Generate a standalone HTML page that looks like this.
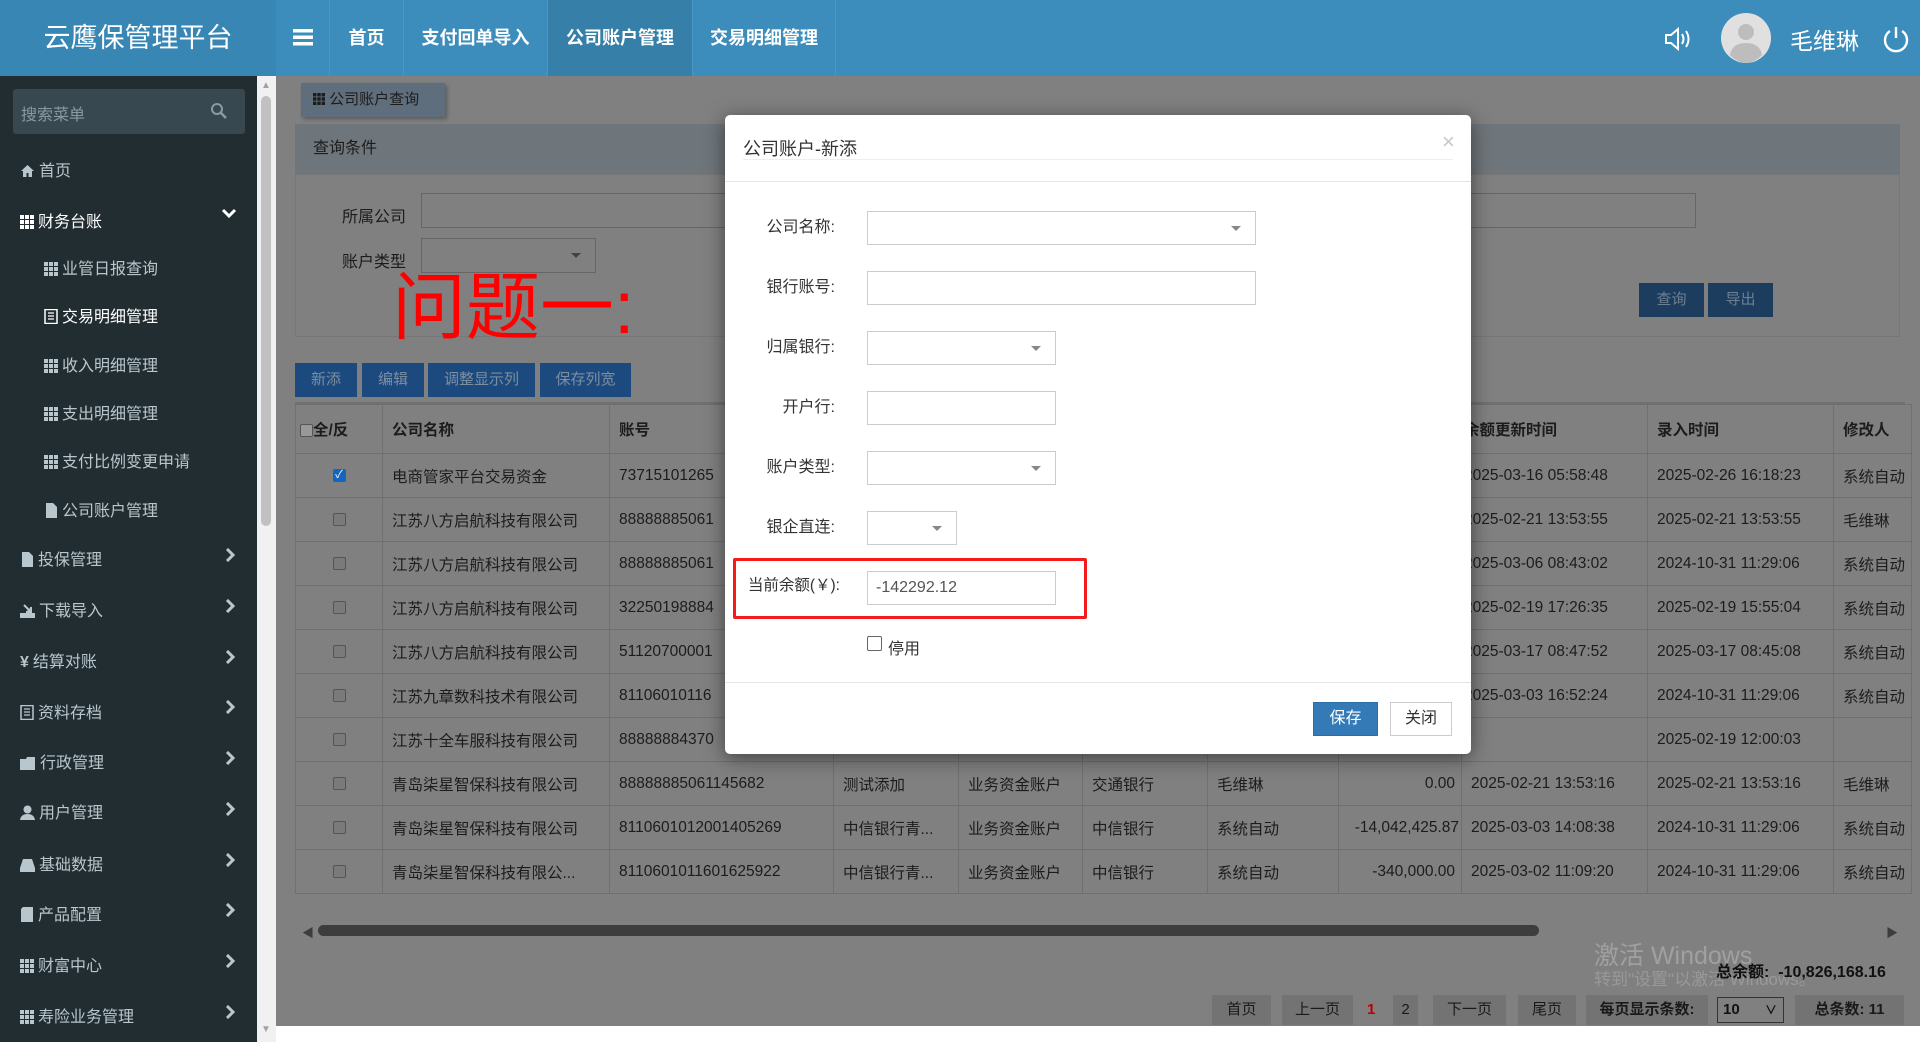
<!DOCTYPE html>
<html><head><meta charset="utf-8">
<style>
*{box-sizing:border-box;margin:0;padding:0}
body{width:1920px;height:1042px;overflow:hidden;position:relative;background:#fff;font-family:"Liberation Sans","Noto Sans CJK SC",sans-serif;}
.abs{position:absolute}
#hdr{left:0;top:0;width:1920px;height:76px;background:#3c8dbc}
#logo{left:0;top:0;width:276px;height:76px;background:#3886b4;color:#fff;font-size:27px;line-height:76px;text-align:center}
.nav{top:0;height:76px;line-height:76px;color:#fff;font-weight:bold;font-size:18px;text-align:center;border-right:1px solid #4a97c4}
#side{left:0;top:76px;width:257px;height:966px;background:#222d32}
#sbar{left:257px;top:76px;width:19px;height:966px;background:#f1f1f1}
.mi{left:20px;color:#b8c7ce;font-size:16px;height:24px;line-height:24px}
.mi svg{vertical-align:-2px;margin-right:4px}
.sub{left:44px}
.arr{left:225px}
#content{left:276px;top:76px;width:1644px;height:950px;background:#808080;overflow:hidden}
table{border-collapse:collapse;table-layout:fixed;font-size:15.5px;color:#1c1c1c}
td{border:1px solid #707070;height:44px;padding:0 9px;white-space:nowrap;overflow:hidden}
th{border:1px solid #707070;height:49px;padding:0 9px;text-align:left;font-weight:bold;white-space:nowrap;overflow:hidden}
.cb{display:inline-block;width:13px;height:13px;border:1px solid #555;border-radius:2px;background:#7a7a7a;vertical-align:middle}
.btn{height:34px;line-height:34px;color:#7d8ea0;font-size:15px;text-align:center;background:#1c4a7e}
.pg{top:919px;height:30px;line-height:30px;background:#737373;color:#1a1a1a;font-size:15px;text-align:center}
#modal{left:725px;top:115px;width:746px;height:639px;background:#fff;border-radius:5px;box-shadow:0 4px 20px rgba(0,0,0,.5)}
.lab{font-size:16px;color:#333;text-align:right;width:120px;left:0}
.inp{border:1px solid #ccc;height:34px;background:#fff}
.dd{position:absolute;right:14px;top:14px;width:0;height:0;border-left:5px solid transparent;border-right:5px solid transparent;border-top:5px solid #888}
</style></head><body>
<div id="hdr" class="abs"></div>
<div id="logo" class="abs">云鹰保管理平台</div>
<div class="abs nav" style="left:276px;width:54px;"><svg width="20" height="18" viewBox="0 0 20 18" style="vertical-align:-2px"><rect x="0" y="1" width="20" height="3.5" fill="#fff"/><rect x="0" y="7.5" width="20" height="3.5" fill="#fff"/><rect x="0" y="14" width="20" height="3.5" fill="#fff"/></svg></div>
<div class="abs nav" style="left:330px;width:74px;">首页</div>
<div class="abs nav" style="left:404px;width:144px;">支付回单导入</div>
<div class="abs nav" style="left:548px;width:145px;background:#367fa9">公司账户管理</div>
<div class="abs nav" style="left:693px;width:143px;">交易明细管理</div>
<svg class="abs" style="left:1664px;top:26px" width="30" height="26" viewBox="0 0 30 26"><path d="M2 9h5l7-6v20l-7-6H2z" fill="none" stroke="#fff" stroke-width="2"/><path d="M18 8q3 5 0 10M22 5q5 8 0 16" fill="none" stroke="#fff" stroke-width="2"/></svg>
<svg class="abs" style="left:1721px;top:13px" width="50" height="50" viewBox="0 0 50 50"><circle cx="25" cy="25" r="25" fill="#e0e0e0"/><circle cx="25" cy="19" r="8" fill="#bdbdbd"/><path d="M9 42q2-12 16-12t16 12q-8 8-16 8t-16-8z" fill="#bdbdbd"/></svg>
<div class="abs" style="left:1790px;top:22px;color:#fff;font-size:23px">毛维琳</div>
<svg class="abs" style="left:1882px;top:25px" width="28" height="28" viewBox="0 0 28 28"><path d="M8 6a11 11 0 1 0 12 0" fill="none" stroke="#fff" stroke-width="2.4"/><path d="M14 2v11" stroke="#fff" stroke-width="2.4"/></svg>

<div id="side" class="abs"></div>
<div id="sbar" class="abs"><div class="abs" style="left:4px;top:20px;width:10px;height:430px;background:#c1c1c1;border-radius:5px"></div><div class="abs" style="left:4px;top:4px;color:#a3a3a3;font-size:10px">▲</div><div class="abs" style="left:4px;top:948px;color:#a3a3a3;font-size:10px">▼</div></div>
<div class="abs" style="left:13px;top:89px;width:232px;height:45px;background:#374850;border-radius:3px"></div>
<div class="abs" style="left:21px;top:101px;color:#8a9aa2;font-size:16px">搜索菜单</div>
<svg class="abs" style="left:210px;top:102px" width="18" height="18" viewBox="0 0 18 18"><circle cx="7" cy="7" r="5" fill="none" stroke="#8a9aa2" stroke-width="2"/><path d="M11 11l5 5" stroke="#8a9aa2" stroke-width="2.5"/></svg>

<svg width="0" height="0" style="position:absolute"><defs><g id="g"><rect x="0" y="0" width="4" height="4"/><rect x="5" y="0" width="4" height="4"/><rect x="10" y="0" width="4" height="4"/><rect x="0" y="5" width="4" height="4"/><rect x="5" y="5" width="4" height="4"/><rect x="10" y="5" width="4" height="4"/><rect x="0" y="10" width="4" height="4"/><rect x="5" y="10" width="4" height="4"/><rect x="10" y="10" width="4" height="4"/></g><path id="chev" d="M2 1l6 6-6 6" fill="none" stroke="#b8c7ce" stroke-width="3"/></defs></svg>

<div class="abs mi" style="top:160px"><svg width="15" height="14"><path d="M7.5 1L1 7h2v6h3.5V9h2v4H12V7h2z" fill="#b8c7ce"/></svg>首页</div>
<div class="abs mi" style="top:211px;color:#fff"><svg width="14" height="14" fill="#fff"><use href="#g"/></svg>财务台账</div>
<svg class="abs" style="left:221px;top:208px" width="16" height="12"><path d="M2 2l6 6 6-6" fill="none" stroke="#fff" stroke-width="3"/></svg>
<div class="abs mi sub" style="top:258px"><svg width="14" height="14" fill="#b8c7ce"><use href="#g"/></svg>业管日报查询</div>
<div class="abs mi sub" style="top:306px;color:#fff"><svg width="14" height="15"><rect x="1" y="0.5" width="12" height="14" fill="none" stroke="#fff" stroke-width="1.5"/><path d="M4 4h6M4 7h6M4 10h6" stroke="#fff" stroke-width="1.3"/></svg>交易明细管理</div>
<div class="abs mi sub" style="top:355px"><svg width="14" height="14" fill="#b8c7ce"><use href="#g"/></svg>收入明细管理</div>
<div class="abs mi sub" style="top:403px"><svg width="14" height="14" fill="#b8c7ce"><use href="#g"/></svg>支出明细管理</div>
<div class="abs mi sub" style="top:451px"><svg width="14" height="14" fill="#b8c7ce"><use href="#g"/></svg>支付比例变更申请</div>
<div class="abs mi sub" style="top:500px"><svg width="14" height="15"><path d="M2 0h7l4 4v11H2z" fill="#b8c7ce"/></svg>公司账户管理</div>

<div class="abs mi" style="top:549px"><svg width="14" height="15"><path d="M2 0h7l4 4v11H2z" fill="#b8c7ce"/></svg>投保管理</div>
<div class="abs mi" style="top:600px"><svg width="15" height="15"><path d="M1 14h13v-3H1zM4 2l7 7M6 9h5V4" fill="#b8c7ce" stroke="#b8c7ce" stroke-width="2"/></svg>下载导入</div>
<div class="abs mi" style="top:651px"><span style="font-weight:bold;margin-right:4px">¥</span>结算对账</div>
<div class="abs mi" style="top:702px"><svg width="14" height="15"><rect x="1" y="0.5" width="12" height="14" fill="none" stroke="#b8c7ce" stroke-width="1.5"/><path d="M4 4h6M4 7h6M4 10h6" stroke="#b8c7ce" stroke-width="1.3"/></svg>资料存档</div>
<div class="abs mi" style="top:752px"><svg width="16" height="14"><path d="M0 3h6l1-2h8v13H0z" fill="#b8c7ce"/></svg>行政管理</div>
<div class="abs mi" style="top:802px"><svg width="15" height="15"><circle cx="7.5" cy="4.5" r="4" fill="#b8c7ce"/><path d="M0 15q1-6 7.5-6t7.5 6z" fill="#b8c7ce"/></svg>用户管理</div>
<div class="abs mi" style="top:854px"><svg width="15" height="14"><path d="M3 1h9l3 9v4H0v-4z" fill="#b8c7ce"/></svg>基础数据</div>
<div class="abs mi" style="top:904px"><svg width="14" height="15"><path d="M3 0h10v15H1V2z" fill="#b8c7ce"/></svg>产品配置</div>
<div class="abs mi" style="top:955px"><svg width="14" height="14" fill="#b8c7ce"><use href="#g"/></svg>财富中心</div>
<div class="abs mi" style="top:1006px"><svg width="14" height="14" fill="#b8c7ce"><use href="#g"/></svg>寿险业务管理</div>
<svg class="abs arr" style="top:548px" width="10" height="14"><use href="#chev"/></svg>
<svg class="abs arr" style="top:599px" width="10" height="14"><use href="#chev"/></svg>
<svg class="abs arr" style="top:650px" width="10" height="14"><use href="#chev"/></svg>
<svg class="abs arr" style="top:700px" width="10" height="14"><use href="#chev"/></svg>
<svg class="abs arr" style="top:751px" width="10" height="14"><use href="#chev"/></svg>
<svg class="abs arr" style="top:802px" width="10" height="14"><use href="#chev"/></svg>
<svg class="abs arr" style="top:853px" width="10" height="14"><use href="#chev"/></svg>
<svg class="abs arr" style="top:903px" width="10" height="14"><use href="#chev"/></svg>
<svg class="abs arr" style="top:954px" width="10" height="14"><use href="#chev"/></svg>
<svg class="abs arr" style="top:1005px" width="10" height="14"><use href="#chev"/></svg>

<div id="content" class="abs">
 <div class="abs" style="left:25px;top:7px;width:144px;height:34px;background:#5f6e7c;box-shadow:2px 2px 4px rgba(0,0,0,.3);color:#1c1c1c;font-size:15px;line-height:34px;padding-left:12px"><svg width="12" height="12" fill="#1c1c1c" viewBox="0 0 14 14" style="vertical-align:-1px"><use href="#g"/></svg> 公司账户查询</div>
 <div class="abs" style="left:19px;top:48px;width:1605px;height:50px;background:#6f767b;color:#1c1c1c;font-size:16px;line-height:50px;padding-left:18px">查询条件</div>
 <div class="abs" style="left:19px;top:98px;width:1605px;height:163px;border:1px solid #777"></div>
 <div class="abs" style="left:66px;top:127px;font-size:16px;color:#1c1c1c">所属公司</div>
 <div class="abs" style="left:145px;top:117px;width:1275px;height:35px;border:1px solid #666"></div>
 <div class="abs" style="left:66px;top:172px;font-size:16px;color:#1c1c1c">账户类型</div>
 <div class="abs" style="left:145px;top:162px;width:175px;height:35px;border:1px solid #666"><div class="dd" style="border-top-color:#444"></div></div>
 <div class="abs btn" style="left:1363px;top:207px;width:65px;color:#6d7f92;background:#1c3d5e">查询</div>
 <div class="abs btn" style="left:1432px;top:207px;width:65px;color:#6d7f92;background:#1c3d5e">导出</div>
 <div class="abs btn" style="left:19px;top:287px;width:62px">新添</div>
 <div class="abs btn" style="left:86px;top:287px;width:62px">编辑</div>
 <div class="abs btn" style="left:152px;top:287px;width:107px">调整显示列</div>
 <div class="abs btn" style="left:264px;top:287px;width:91px">保存列宽</div>
 <div class="abs" style="left:19px;top:326px;width:1610px;height:3px;background:#707070"></div>
 <table class="abs" style="left:19px;top:328px;width:1616px">
 <colgroup><col style="width:87px"><col style="width:227px"><col style="width:224px"><col style="width:125px"><col style="width:124px"><col style="width:125px"><col style="width:131px"><col style="width:123px"><col style="width:186px"><col style="width:186px"><col style="width:78px"></colgroup>
 <tr><th style="padding:0 4px"><span class="cb" style="background:#999"></span>全/反</th><th>公司名称</th><th>账号</th><th>备注</th><th>账户类型</th><th>归属银行</th><th>修改人</th><th>余额</th><th style="padding-left:2px">余额更新时间</th><th>录入时间</th><th>修改人</th></tr>
 <tr><td style="text-align:center"><span class="cb" style="background:#1565c0;border-color:#1565c0;color:#fff;font-size:11px;line-height:11px">✓</span></td><td>电商管家平台交易资金</td><td>73715101265</td><td></td><td></td><td></td><td></td><td></td><td style="padding-left:2px">2025-03-16 05:58:48</td><td>2025-02-26 16:18:23</td><td>系统自动</td></tr>
 <tr><td style="text-align:center"><span class="cb"></span></td><td>江苏八方启航科技有限公司</td><td>88888885061</td><td></td><td></td><td></td><td></td><td></td><td style="padding-left:2px">2025-02-21 13:53:55</td><td>2025-02-21 13:53:55</td><td>毛维琳</td></tr>
 <tr><td style="text-align:center"><span class="cb"></span></td><td>江苏八方启航科技有限公司</td><td>88888885061</td><td></td><td></td><td></td><td></td><td></td><td style="padding-left:2px">2025-03-06 08:43:02</td><td>2024-10-31 11:29:06</td><td>系统自动</td></tr>
 <tr><td style="text-align:center"><span class="cb"></span></td><td>江苏八方启航科技有限公司</td><td>32250198884</td><td></td><td></td><td></td><td></td><td></td><td style="padding-left:2px">2025-02-19 17:26:35</td><td>2025-02-19 15:55:04</td><td>系统自动</td></tr>
 <tr><td style="text-align:center"><span class="cb"></span></td><td>江苏八方启航科技有限公司</td><td>51120700001</td><td></td><td></td><td></td><td></td><td></td><td style="padding-left:2px">2025-03-17 08:47:52</td><td>2025-03-17 08:45:08</td><td>系统自动</td></tr>
 <tr><td style="text-align:center"><span class="cb"></span></td><td>江苏九章数科技术有限公司</td><td>81106010116</td><td></td><td></td><td></td><td></td><td></td><td style="padding-left:2px">2025-03-03 16:52:24</td><td>2024-10-31 11:29:06</td><td>系统自动</td></tr>
 <tr><td style="text-align:center"><span class="cb"></span></td><td>江苏十全车服科技有限公司</td><td>88888884370</td><td></td><td></td><td></td><td></td><td></td><td></td><td>2025-02-19 12:00:03</td><td></td></tr>
 <tr><td style="text-align:center"><span class="cb"></span></td><td>青岛柒星智保科技有限公司</td><td>88888885061145682</td><td>测试添加</td><td>业务资金账户</td><td>交通银行</td><td>毛维琳</td><td style="text-align:right;padding-right:6px">0.00</td><td>2025-02-21 13:53:16</td><td>2025-02-21 13:53:16</td><td>毛维琳</td></tr>
 <tr><td style="text-align:center"><span class="cb"></span></td><td>青岛柒星智保科技有限公司</td><td>8110601012001405269</td><td>中信银行青...</td><td>业务资金账户</td><td>中信银行</td><td>系统自动</td><td style="text-align:right;padding:0 2px">-14,042,425.87</td><td>2025-03-03 14:08:38</td><td>2024-10-31 11:29:06</td><td>系统自动</td></tr>
 <tr><td style="text-align:center"><span class="cb"></span></td><td>青岛柒星智保科技有限公...</td><td>8110601011601625922</td><td>中信银行青...</td><td>业务资金账户</td><td>中信银行</td><td>系统自动</td><td style="text-align:right;padding-right:6px">-340,000.00</td><td>2025-03-02 11:09:20</td><td>2024-10-31 11:29:06</td><td>系统自动</td></tr>
 </table>
 <div class="abs" style="left:26px;top:848px;color:#3d3d3d;font-size:12px">◀</div>
 <div class="abs" style="left:42px;top:849px;width:1221px;height:11px;background:#3d3d3d;border-radius:6px"></div>
 <div class="abs" style="left:1610px;top:848px;color:#3d3d3d;font-size:12px">▶</div>
 <div class="abs" style="left:1318px;top:860px;color:#a0a0a0;font-size:25px">激活 Windows</div>
 <div class="abs" style="left:1318px;top:889px;color:#999;font-size:17px">转到"设置"以激活 Windows。</div>
 <div class="abs" style="left:1440px;top:882px;color:#111;font-size:16px;font-weight:bold">总余额: &nbsp;-10,826,168.16</div>
 <div class="abs pg" style="left:936px;width:59px">首页</div>
 <div class="abs pg" style="left:1006px;width:71px">上一页</div>
 <div class="abs" style="left:1091px;top:919px;line-height:30px;color:#b00;font-size:15px;font-weight:bold">1</div>
 <div class="abs pg" style="left:1117px;width:25px">2</div>
 <div class="abs pg" style="left:1157px;width:73px">下一页</div>
 <div class="abs pg" style="left:1242px;width:58px">尾页</div>
 <div class="abs pg" style="left:1310px;width:122px;font-weight:bold">每页显示条数:</div>
 <div class="abs" style="left:1441px;top:921px;width:67px;height:26px;border:1px solid #333;background:#808080;font-size:15px;font-weight:bold;line-height:24px;padding-left:5px;color:#111">10 <span style="position:absolute;right:6px;font-size:12px">∨</span></div>
 <div class="abs pg" style="left:1519px;width:109px;font-weight:bold">总条数: 11</div>
</div>

<div class="abs" style="left:392px;top:268px;color:#ff0000;font-size:74px;line-height:80px;letter-spacing:0px">问题一:</div>

<div id="modal" class="abs">
 <div class="abs" style="left:18px;top:20px;font-size:18px;color:#333">公司账户-新添</div>
 <div class="abs" style="left:717px;top:14px;font-size:22px;color:#c8c8c8">×</div>
 <div class="abs" style="left:18px;top:44px;width:710px;height:1px;background:#eee"></div>
 <div class="abs" style="left:0;top:66px;width:746px;height:1px;background:#e5e5e5"></div>
 <div class="abs lab" style="top:98px;left:-10px">公司名称:</div>
 <div class="abs inp" style="left:142px;top:96px;width:389px"><div class="dd"></div></div>
 <div class="abs lab" style="top:158px;left:-10px">银行账号:</div>
 <div class="abs inp" style="left:142px;top:156px;width:389px"></div>
 <div class="abs lab" style="top:218px;left:-10px">归属银行:</div>
 <div class="abs inp" style="left:142px;top:216px;width:189px"><div class="dd"></div></div>
 <div class="abs lab" style="top:278px;left:-10px">开户行:</div>
 <div class="abs inp" style="left:142px;top:276px;width:189px"></div>
 <div class="abs lab" style="top:338px;left:-10px">账户类型:</div>
 <div class="abs inp" style="left:142px;top:336px;width:189px"><div class="dd"></div></div>
 <div class="abs lab" style="top:398px;left:-10px">银企直连:</div>
 <div class="abs inp" style="left:142px;top:396px;width:90px"><div class="dd"></div></div>
 <div class="abs" style="left:8px;top:443px;width:354px;height:61px;border:3px solid #f31b1b;border-radius:2px"></div>
 <div class="abs lab" style="top:458px;left:-10px;width:125px;font-size:15.5px">当前余额(￥):</div>
 <div class="abs inp" style="left:142px;top:456px;width:189px;font-size:16px;color:#555;line-height:32px;padding-left:8px">-142292.12</div>
 <div class="abs" style="left:142px;top:521px;width:15px;height:15px;border:1px solid #666;border-radius:2px"></div>
 <div class="abs" style="left:163px;top:520px;font-size:16px;color:#333">停用</div>
 <div class="abs" style="left:0;top:567px;width:746px;height:1px;background:#e5e5e5"></div>
 <div class="abs" style="left:588px;top:587px;width:65px;height:34px;background:#337ab7;border:1px solid #2e6da4;color:#fff;font-size:16px;line-height:32px;text-align:center">保存</div>
 <div class="abs" style="left:665px;top:587px;width:62px;height:34px;background:#fff;border:1px solid #ccc;color:#333;font-size:16px;line-height:32px;text-align:center">关闭</div>
</div>
</body></html>
